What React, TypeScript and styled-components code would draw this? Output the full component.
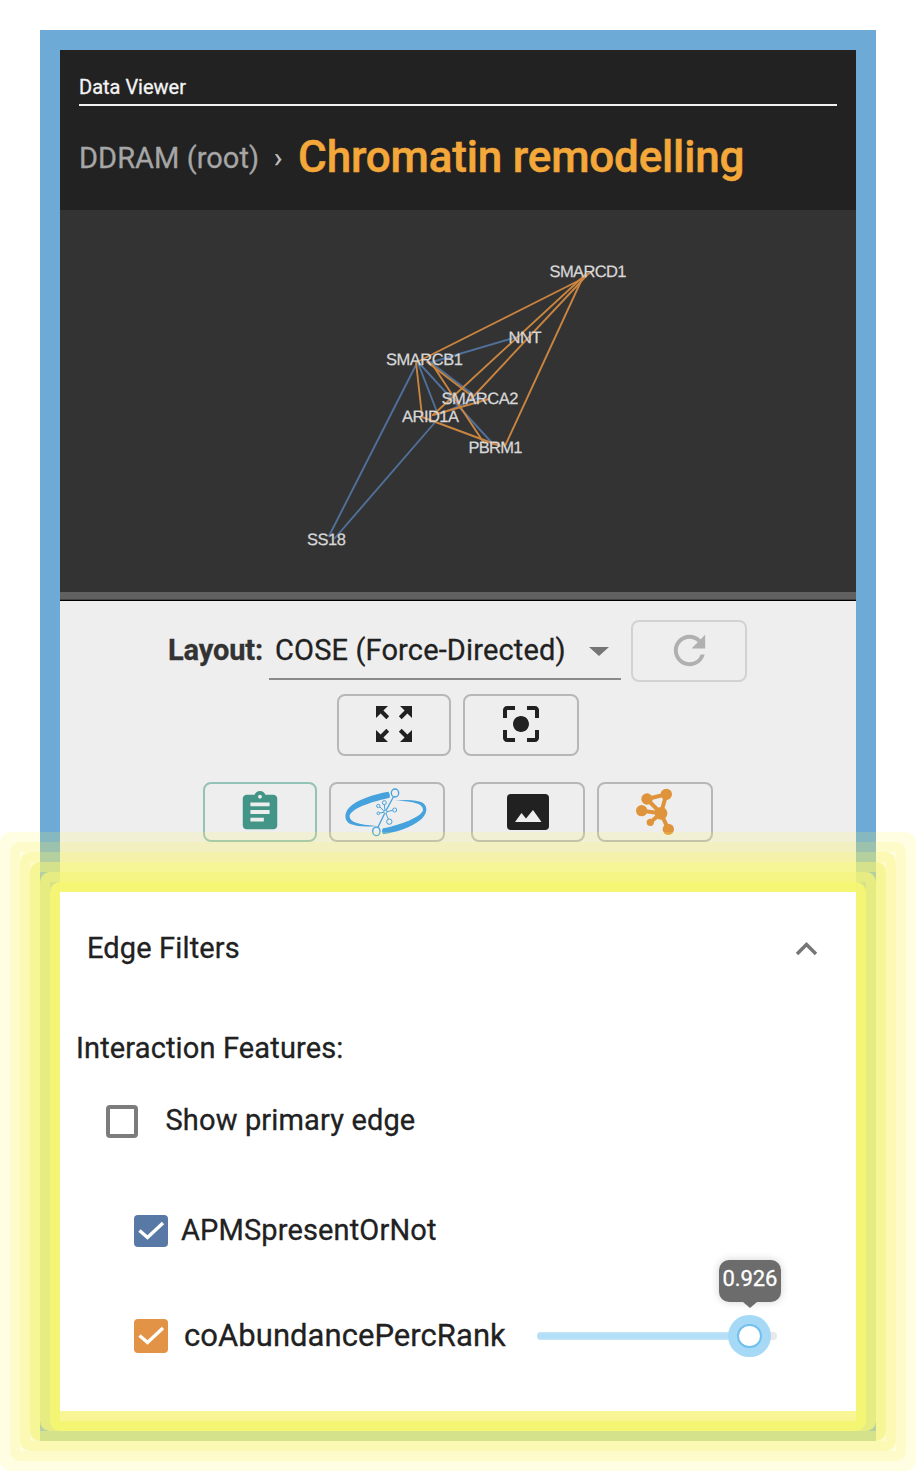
import React from "react";
import styled, { createGlobalStyle } from "styled-components";
import { MdRefresh, MdZoomOutMap, MdCenterFocusStrong, MdAssignment } from "react-icons/md";

const GlobalStyle = createGlobalStyle`
  *, *::after { box-sizing: border-box; }
  body { margin: 0; background: #fff; font-family: Roboto, "Liberation Sans", sans-serif; }
`;

const Page = styled.div`
  display: grid;
  grid-template-columns: 916px;
  grid-template-rows: 1471px;
`;

const Frame = styled.section`
  grid-area: 1 / 1;
  margin: 30px 40px;
  padding: 20px;
  background: #6daad5;
  display: flex;
  flex-direction: column;
`;

const Header = styled.header`
  height: 160px;
  padding: 24px 19px 0;
  background: #222;
`;

const Tab = styled.div`
  height: 32px;
  border-bottom: 2px solid #f1f1f1;
  color: #f4f4f4;
  font-size: 20px;
  line-height: 26px;
  -webkit-text-stroke: 0.3px;
`;

const Crumbs = styled.nav`
  display: flex;
  align-items: center;
  height: 102px;
  line-height: 102px;
  white-space: nowrap;
  -webkit-text-stroke: 0.3px;
`;

const Crumb = styled.span`
  padding-top: 2px;
  color: #a6a6a6;
  font-size: 29px;
  letter-spacing: 0.05px;
`;

const Separator = styled.span`
  width: 39px;
  padding-top: 2px;
  padding-left: 15px;
  color: #c0c0c0;
  font-size: 28px;
`;

const Current = styled.span`
  color: #f4a83a;
  font-size: 44px;
  font-weight: 500;
  letter-spacing: -0.18px;
  -webkit-text-stroke: 0.5px;
`;

const Network = styled.svg`
  display: block;
  flex: none;
  width: 796px;
  height: 382px;
  background: #333;
`;

const Divider = styled.div`
  height: 9px;
  background: #606060;
  border-bottom: 1px solid #000;
  box-shadow: inset 0 -1px #444;
`;

const Controls = styled.div`
  height: 261px;
  padding-top: 19px;
  background: #eee;
`;

const Backdrop = styled.div`
  flex: 1;
  margin-bottom: 10px;
  background: #fff;
`;

const ControlRow = styled.div<{ $gap?: number; $top?: number }>`
  display: flex;
  justify-content: center;
  gap: ${(p) => p.$gap ?? 12}px;
  margin-top: ${(p) => p.$top ?? 0}px;
`;

const LayoutRow = styled.div`
  display: flex;
  padding-left: 108px;
`;

const LayoutLabel = styled.label`
  width: 101px;
  color: #333;
  font-size: 29px;
  font-weight: 700;
  line-height: 61px;
  letter-spacing: -0.15px;
  -webkit-text-stroke: 0.3px;
  white-space: nowrap;
`;

const Select = styled.div`
  display: flex;
  justify-content: space-between;
  align-items: center;
  width: 352px;
  height: 60px;
  margin-right: 10px;
  padding: 2px 12px 0 6px;
  border-bottom: 2px solid #8a8a8a;
  color: #212121;
  font-size: 29px;
  line-height: 56px;
  letter-spacing: 0.15px;
  -webkit-text-stroke: 0.3px;
  white-space: nowrap;
`;

const Caret = styled.span`
  margin-top: 2px;
  border: 10px solid transparent;
  border-top: 9px solid #757575;
  border-bottom: 0;
`;

const IconButton = styled.button<{ $w?: number; $h?: number; $tone?: string; $color?: string }>`
  display: flex;
  align-items: center;
  justify-content: center;
  width: ${(p) => p.$w ?? 116}px;
  height: ${(p) => p.$h ?? 60}px;
  padding: 0 0 ${(p) => (p.$h ? 2 : 0)}px;
  border: 2px solid ${(p) => p.$tone ?? "#b7b7b7"};
  border-radius: 8px;
  background: transparent;
  color: ${(p) => p.$color ?? "#212121"};
  svg { display: block; flex: none; }
`;

const Spacer = styled.span`
  width: 2px;
`;

const Highlight = styled.div`
  grid-area: 1 / 1;
  align-self: end;
  z-index: 1;
  padding: 10px;
  border-radius: 10px;
  background: rgba(255, 247, 95, 0.185);
`;

const Ring = styled.div<{ $tint: string; $fill?: string; $sink?: boolean }>`
  border: 10px solid ${(p) => p.$tint};
  border-radius: 10px;
  background: ${(p) => p.$fill ?? "transparent"};
  margin-bottom: ${(p) => (p.$sink ? -10 : 0)}px;
`;

const PanelBase = styled.div`
  padding-bottom: 10px;
  background: #f8f594;
`;

const Panel = styled.section`
  height: 519px;
  background: #fff;
  color: #212121;
  font-size: 29px;
  line-height: 40px;
  letter-spacing: 0.14px;
  -webkit-text-stroke: 0.3px;
  white-space: nowrap;
`;

const PanelHeader = styled.div`
  display: flex;
  justify-content: space-between;
  align-items: center;
  padding: 36px 38px 0 27px;
`;

const Subtitle = styled.div`
  padding: 60px 0 0 16px;
`;

const Option = styled.div<{ $left: number; $top: number; $gap: number }>`
  display: flex;
  align-items: center;
  height: 40px;
  margin-top: ${(p) => p.$top}px;
  padding-left: ${(p) => p.$left}px;
  gap: ${(p) => p.$gap}px;
`;

const Box = styled.span<{ $fill?: string; $h?: number }>`
  display: flex;
  align-items: center;
  justify-content: center;
  width: ${(p) => (p.$fill ? 34 : 32)}px;
  height: ${(p) => p.$h ?? 33}px;
  margin-top: ${(p) => (p.$fill ? 2 : 3)}px;
  border-radius: 4px;
  border: ${(p) => (p.$fill ? "none" : "4px solid #7c7c7c")};
  background: ${(p) => p.$fill ?? "transparent"};
`;

const Name = styled.span`
  width: 337px;
  padding-top: 2px;
  font-size: 31px;
  letter-spacing: 0.05px;
`;

const Slider = styled.div`
  position: relative;
  width: 240px;
  height: 8px;
  margin-top: 2px;
  border-radius: 4px;
  background: #e9e9e9;
`;

const Track = styled.div`
  width: 213px;
  height: 8px;
  border: 1px solid #c5e6f9;
  border-radius: 3px;
  background: #b5dff7;
`;

const Handle = styled.div`
  position: absolute;
  left: 191px;
  top: -17px;
  width: 43px;
  height: 42px;
  border-radius: 21px;
  background: #a5d9f6;
  display: grid;
  place-items: center;
  &::after {
    content: "";
    width: 25px;
    height: 24px;
    border: 2px solid #71c0ee;
    border-radius: 12px;
    background: #fff;
  }
`;

const Tooltip = styled.div`
  position: absolute;
  left: 182px;
  top: -72px;
  width: 62px;
  height: 42px;
  border-radius: 10px;
  background: #6c6c6c;
  box-shadow: 0 0 8px rgba(0, 0, 0, 0.18);
  color: #fff;
  font-size: 22px;
  line-height: 38px;
  letter-spacing: -0.1px;
  text-align: center;
  &::after {
    content: "";
    position: absolute;
    left: 24px;
    top: 42px;
    border: 7px solid transparent;
    border-top: 6px solid #6c6c6c;
    border-bottom: 0;
  }
`;

const orange = [
  [582, 279, 417, 362], [585, 275, 433, 415], [588, 274, 471, 399],
  [582, 279, 505, 446], [427, 362, 472, 396], [432, 364, 484, 443],
  [416, 362, 422, 416], [422, 417, 500, 446], [433, 415, 489, 399],
  [578, 281, 593, 271],
];
const blue = [
  [432, 362, 517, 337], [417, 363, 329, 536], [437, 420, 335, 538],
  [418, 363, 437, 412], [419, 363, 493, 444], [430, 362, 475, 396],
  [440, 414, 480, 397],
];
const genes: [string, number, number, number][] = [
  ["SMARCD1", 549.5, 277, 77], ["NNT", 508.5, 343, 33], ["SMARCB1", 386, 365.4, 77],
  ["SMARCA2", 441.5, 404, 77], ["ARID1A", 402, 421.5, 57], ["PBRM1", 468.5, 453, 54],
  ["SS18", 307, 545, 39],
];

const GeneNetwork = () => (
  <Network viewBox="60 210 796 382">
    <g stroke="#507099" strokeWidth="1.9" strokeLinecap="round">
      {blue.map(([a, b, c, d], i) => <line key={i} x1={a} y1={b} x2={c} y2={d} />)}
    </g>
    <g stroke="#c98540" strokeWidth="1.9" strokeLinecap="round">
      {orange.map(([a, b, c, d], i) => <line key={i} x1={a} y1={b} x2={c} y2={d} />)}
    </g>
    <g fill="#d8d8d8" stroke="#d8d8d8" strokeWidth="0.25" textRendering="geometricPrecision" fontFamily='"Liberation Sans", sans-serif' fontSize="16.5">
      {genes.map(([name, x, y, w]) => (
        <text key={name} x={x} y={y} textLength={w}>{name}</text>
      ))}
    </g>
  </Network>
);

const OrbitLogo = () => (
  <svg width="84" height="50" viewBox="554 620 252 150" fill="none" stroke="#46a2dd">
    <path d="M684 634Q690 640 688 652C640 663 577 681 568 705C565 725 590 733 648 737Q600 742 570 731C552 722 550 700 566 682C590 657 640 642 684 634Z" fill="#46a2dd" stroke="none" />
    <path d="M668 762Q662 752 668 744C720 735 783 710 788 690C790 672 765 662 704 661Q760 655 787 667C805 680 800 702 780 719C755 740 705 757 668 762Z" fill="#46a2dd" stroke="none" />
    <g strokeWidth="4">
      <ellipse cx="704" cy="638" rx="11" ry="12" />
      <ellipse cx="648" cy="753" rx="11" ry="13" />
      <path d="M699 650L678 689M672 701L653 741" />
    </g>
    <g strokeWidth="3">
      <circle cx="675" cy="695" r="5" />
      <circle cx="672" cy="667" r="6" />
      <circle cx="654" cy="677" r="5" />
      <circle cx="654" cy="699" r="4" />
      <circle cx="703" cy="689" r="6" />
      <circle cx="687" cy="724" r="8" />
      <path d="M672 673L674 690M659 680L670 691M658 698L670 696M680 694L697 690M677 700L684 716" />
    </g>
  </svg>
);

const ImageIcon = () => (
  <svg width="42" height="36" viewBox="0 0 42 36">
    <rect width="42" height="36" rx="4" fill="#212121" />
    <path d="M8 28L14.5 19L19 24.5L26 16L34.5 28Z" fill="#eee" />
  </svg>
);

const MoleculeIcon = () => (
  <svg width="40" height="48" viewBox="555 624 120 144" fill="#df943c">
    <g stroke="#df943c" strokeWidth="12">
      <path d="M591 657L649 643L633 700ZM575 692L633 700L655 748M601 727L633 700" fill="none" />
    </g>
    <circle cx="591" cy="657" r="17" />
    <circle cx="649" cy="643" r="17" />
    <circle cx="575" cy="692" r="17" />
    <circle cx="633" cy="700" r="19" />
    <circle cx="655" cy="748" r="17" />
    <circle cx="601" cy="727" r="11" />
  </svg>
);

const Check = () => (
  <svg width="34" height="33" viewBox="0 0 34 33" fill="none" stroke="#fff" strokeWidth="3.4">
    <path d="M5.5 15.5L13.5 22.5L29 8" />
  </svg>
);

const EdgeFilters = () => (
  <Panel>
    <PanelHeader>
      <span>Edge Filters</span>
      <svg width="24" height="16" viewBox="0 0 24 16" fill="none" stroke="#757575" strokeWidth="3.4">
        <path d="M3 14L12.5 4.5L22 14" />
      </svg>
    </PanelHeader>
    <Subtitle>Interaction Features:</Subtitle>
    <Option $left={46} $top={32} $gap={27.5}>
      <Box />
      <span>Show primary edge</span>
    </Option>
    <Option $left={74} $top={70} $gap={13}>
      <Box $fill="#5879a6" $h={32}><Check /></Box>
      <span>APMSpresentOrNot</span>
    </Option>
    <Option $left={74} $top={65} $gap={16}>
      <Box $fill="#e39345" $h={34}><Check /></Box>
      <Name>coAbundancePercRank</Name>
      <Slider>
        <Track />
        <Handle />
        <Tooltip>0.926</Tooltip>
      </Slider>
    </Option>
  </Panel>
);

export default function App() {
  return (
    <>
      <GlobalStyle />
      <Page>
        <Frame>
          <Header>
            <Tab>Data Viewer</Tab>
            <Crumbs>
              <Crumb>DDRAM (root)</Crumb>
              <Separator>›</Separator>
              <Current>Chromatin remodelling</Current>
            </Crumbs>
          </Header>
          <GeneNetwork />
          <Divider />
          <Controls>
            <LayoutRow>
              <LayoutLabel>Layout:</LayoutLabel>
              <Select>COSE (Force-Directed)<Caret /></Select>
              <IconButton $h={62} $tone="#d2d2d2" $color="#b0b0b0"><MdRefresh size={47} /></IconButton>
            </LayoutRow>
            <ControlRow $top={12}>
              <IconButton $w={114} $h={62}><MdZoomOutMap size={48} /></IconButton>
              <IconButton $h={62}><MdCenterFocusStrong size={48} /></IconButton>
            </ControlRow>
            <ControlRow $top={26}>
              <IconButton $w={114} $tone="#93c2b6" $color="#439587"><MdAssignment size={46} /></IconButton>
              <IconButton><OrbitLogo /></IconButton>
              <Spacer />
              <IconButton $w={114}><ImageIcon /></IconButton>
              <IconButton><MoleculeIcon /></IconButton>
            </ControlRow>
          </Controls>
          <Backdrop />
        </Frame>
        <Highlight>
          <Ring $tint="rgba(249, 237, 105, 0.185)">
            <Ring $tint="rgba(243, 243, 120, 0.277)" $fill="rgba(249, 237, 105, 0.185)">
              <Ring $tint="rgba(244, 244, 125, 0.52)" $fill="rgba(243, 243, 120, 0.277)">
                <Ring $tint="rgba(245, 245, 120, 0.565)" $fill="rgba(244, 244, 125, 0.52)">
                  <Ring $tint="rgba(246, 245, 115, 0.95)" $sink>
                    <PanelBase><EdgeFilters /></PanelBase>
                  </Ring>
                </Ring>
              </Ring>
            </Ring>
          </Ring>
        </Highlight>
      </Page>
    </>
  );
}
